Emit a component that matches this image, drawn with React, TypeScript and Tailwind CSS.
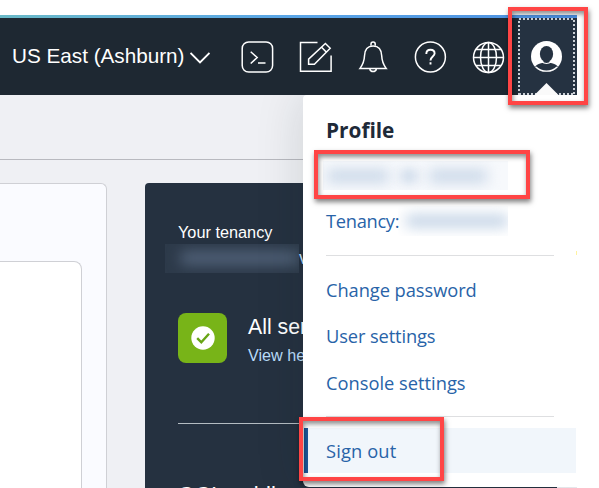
import React from "react";

const arial = "font-['Liberation_Sans',Arial,sans-serif]";
const segoe = "font-['Open_Sans','Noto_Sans',sans-serif]";

function Icon({ className, children }: { className: string; children: React.ReactNode }) {
  return (
    <svg viewBox="0 0 32 32" className={`size-8 shrink-0 overflow-visible fill-none stroke-white stroke-[1.5] ${className}`}>
      {children}
    </svg>
  );
}

function Header() {
  return (
    <header className="flex h-[77px] w-[577px] items-stretch bg-[#1e2832]">
      <div className="flex w-[518px] items-center">
        <div className={`${arial} mb-0.5 ml-3 w-[173px] whitespace-nowrap text-[20.7px] leading-6 text-white`}>
          US East (Ashburn)
        </div>
        <svg viewBox="0 0 20 12" className="ml-[5px] mt-0.5 h-3 w-5 shrink-0 fill-none stroke-white stroke-[1.9]">
          <path d="M.5 1 10 10.5 19.5 1" />
        </svg>
        <Icon className="ml-[31px]">
          <rect x="1.2" y=".9" width="30.4" height="30.2" rx="6.5" />
          <path d="m9.700 10.800 6.500 5.700-6.500 6M17 21.900h7.500" />
        </Icon>
        <Icon className="ml-[26px]">
          <path d="M18.500 1.500H1.500v28.700h30.600V14.500" />
          <path d="m26.400 2.500 4.800 4.700-15.800 16.100h-5.800v-5.200ZM22.600 6.200l4.600 4.800" />
        </Icon>
        <Icon className="ml-[26px]">
          <path d="M2.900 27.600h26.400c-3-4-4.400-7-4.600-12.800C24.500 8 21.500 4.900 16.100 4.900S7.700 8 7.500 14.800c-.2 5.800-1.600 8.800-4.600 12.800Z" />
          <path d="M14 4.700V3a2.100 2.100 0 0 1 4.200 0v1.700M12.800 28a3.400 3.400 0 0 0 6.600 0" />
        </Icon>
        <Icon className="ml-[25px]">
          <circle cx="16.400" cy="16" r="15" />
          <path d="M12.300 13c0-2.600 1.700-4.200 4.200-4.200s4.100 1.500 4.100 3.700c0 3-4.100 3.200-4.100 7M16.500 21.300v2.200" className="stroke-[1.900]" />
        </Icon>
        <Icon className="ml-[26px]">
          <circle cx="16.500" cy="16.500" r="15" />
          <ellipse cx="16.500" cy="16.500" rx="8" ry="15" />
          <path d="M16.500 1.500v30M4 8.500h25M1.500 16.500h30M4 24.500h25" />
        </Icon>
      </div>
      <div className="w-[59px] bg-[#253241]">
        <svg viewBox="0 0 59 77" className="h-[77px] w-[59px]">
          <path d="M1 77V1h55v76" className="fill-none stroke-[#cbd0d6] stroke-2 [stroke-dasharray:2_2]" />
          <path d="M1 76h55" className="fill-none stroke-[#cbd0d6] stroke-2 [stroke-dasharray:2_2]" />
          <circle cx="28.500" cy="38.500" r="15.500" className="fill-white" />
          <ellipse cx="28.500" cy="36" rx="6.600" ry="8" className="fill-[#253241]" />
          <path d="M25.500 43v1.700c-3.500.5-6.500 1.300-8.300 3.800a15 15 0 0 0 22.600 0c-1.800-2.500-4.800-3.300-8.300-3.800V43" className="fill-[#253241]" />
          <path d="M18 49c6 5.600 15 5.600 21 0M23.500 43.500c3 2.400 7 2.400 10 0" className="fill-none stroke-white stroke-[1.200]" />
          <path d="m16.500 77 12-12 12 12Z" className="fill-[#fafafa]" />
        </svg>
      </div>
    </header>
  );
}

function Dashboard() {
  return (
    <main className="flex h-[393px] w-[577px] flex-col overflow-hidden bg-[#eff0f4]">
      <div className="h-[65px] shrink-0 border-b border-[#b8b9bf]" />
      <div className="flex">
        <section className="mt-[23px] h-[320px] w-[107px] rounded-tr-md border-r border-t border-[#cfd0d5] bg-[#fafbff] pt-[77px]">
          <div className="h-[230px] w-[82px] rounded-tr-lg border-r border-t border-[#cfd0d5] bg-white" />
        </section>
        <section className={`${arial} ml-[38px] mt-[23px] h-[320px] w-[412px] rounded-tl bg-[#253140] pl-[33px] text-white`}>
          <h2 className="mt-[39px] text-[16.300px] leading-5">Your tenancy</h2>
          <div className="-ml-[13px] mt-0.5 flex h-[29px] w-[150px]">
            <div className="h-[29px] w-[134px] shrink-0 overflow-hidden bg-[#2d3a4a] py-2 pl-4">
              <div className="h-3 bg-[#56677f] blur-[7px]" />
            </div>
            <span className="text-[18px] leading-7 text-[#b9dcfa]">v</span>
          </div>
          <div className="mt-[40px] flex h-[50px]">
            <div className="flex h-[50px] w-[49px] items-center justify-center rounded-lg bg-[#78b418]">
              <svg viewBox="0 0 24 24" className="size-6">
                <circle cx="12" cy="12" r="11.700" className="fill-white" />
                <path d="m6.200 12.200 4.100 4.100 7.700-8.600" className="fill-none stroke-[#68a515] stroke-[2.400]" />
              </svg>
            </div>
            <div className="ml-[21px] whitespace-nowrap">
              <div className="text-[21.300px] leading-7">All services</div>
              <div className="text-[16.200px] leading-7 text-[#b9dcfa]">View health</div>
            </div>
          </div>
          <div className="mt-[60px] w-[370px] border-t border-[#b4bcc2]" />
          <div className="mt-[59px] text-[22px] leading-6">OCI mobile</div>
        </section>
      </div>
    </main>
  );
}

function ProfileMenu() {
  return (
    <aside className={`${segoe} absolute left-[303px] top-[95px] h-[392px] w-[274px] rounded-bl-md rounded-tl bg-white text-[18.300px] text-[#2863a8] shadow-[0_0_48px_rgba(20,40,40,0.150)] [clip-path:inset(0_0_-1px_-60px)]`}>
      <div className="px-[23px]">
        <h1 className="pt-[21px] text-[20.800px] font-bold leading-7 text-[#1e2a38]">Profile</h1>
        <div className="-ml-[3px] mt-[17px] flex h-[29px] w-[185px] items-center gap-3 overflow-hidden bg-[#f7f9fc] pl-1">
          <div className="h-3 w-[62px] bg-[#c5d4e6] blur-[7px]" />
          <div className="h-3 w-[16px] bg-[#c5d4e6] blur-[6px]" />
          <div className="h-3 w-[58px] bg-[#c5d4e6] blur-[7px]" />
        </div>
        <div className="mt-[16px] flex h-[30px] items-center">
          <span className="w-[72px] tracking-[-0.300px]">Tenancy:</span>
          <div className="h-[30px] w-[110px] overflow-hidden py-[9px] pl-2">
            <div className="h-3 bg-[#bfd0e4] blur-[7px]" />
          </div>
        </div>
        <div className="mt-[19px] w-[228px] border-t border-[#dedfe1]" />
        <nav className="flex flex-col pt-[11px]">
          <a className="h-[46px] leading-[46px] tracking-[-0.060px]">Change password</a>
          <a className="h-[47px] leading-[46px] tracking-[-0.120px]">User settings</a>
          <a className="h-[47px] leading-[45px]">Console settings</a>
        </nav>
        <div className="mt-[9px] w-[228px] border-t border-[#dedfe1]" />
      </div>
      <a className="ml-px mr-px mt-[11px] flex h-[45px] items-center border-l-4 border-[#1b5799] bg-[#f1f6fb] pl-[18px] tracking-[0.140px]">Sign out</a>
    </aside>
  );
}

export default function App() {
  return (
    <div className="relative h-[488px] w-[599px] overflow-hidden bg-white">
      <div className="h-[15px]" />
      <div className="h-[3px] w-[577px] bg-gradient-to-r from-[#6ab9c7] via-[#5aa5e6] to-[#4c8fe0]" />
      <Header />
      <Dashboard />
      <ProfileMenu />
      <div className="absolute left-[576px] top-[251px] h-1 w-px bg-[#fff3a0]" />
      <div className="absolute left-[508px] top-[7px] h-[98px] w-[80px] border-4 border-[#ff4545] shadow-[1px_3px_5px_rgba(0,0,0,0.500),inset_1px_3px_5px_rgba(0,0,0,0.450)]" />
      <div className="absolute left-[314px] top-[150px] h-[49px] w-[216px] border-4 border-[#ff4545] shadow-[1px_3px_5px_rgba(0,0,0,0.500),inset_1px_3px_5px_rgba(0,0,0,0.450)]" />
      <div className="absolute left-[299px] top-[417px] h-[64px] w-[145px] border-4 border-[#ff4545] shadow-[1px_3px_5px_rgba(0,0,0,0.500),inset_1px_3px_5px_rgba(0,0,0,0.450)]" />
    </div>
  );
}
